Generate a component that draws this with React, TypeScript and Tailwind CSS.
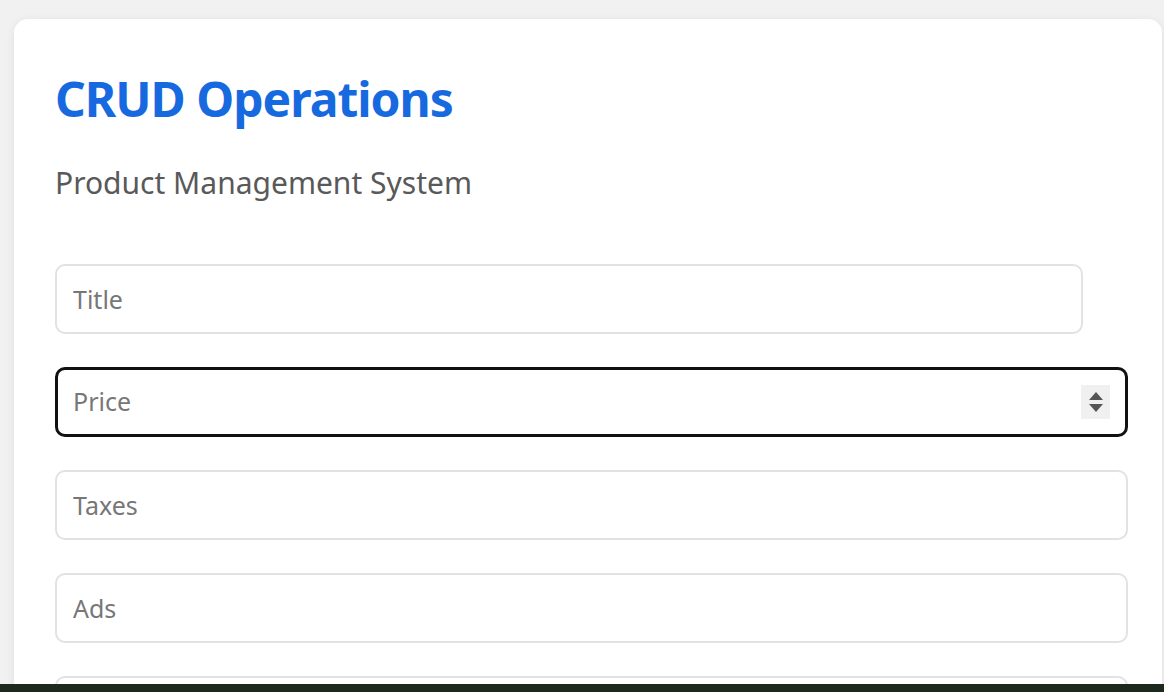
export default function App() {
  return (
    <main
      className="flex h-[692px] flex-col overflow-hidden bg-[#f1f1f1]"
      style={{ fontFamily: '"Noto Sans", "Open Sans", sans-serif' }}
    >
      <div className="flex-1 overflow-hidden pl-[14px] pr-[2px] pt-[19px]">
        <section className="h-[800px] rounded-[14px] bg-white pl-[41px] pt-[50px] shadow-[0_2px_10px_rgba(0,0,0,0.08)]">
          <h1 className="text-[48px] font-bold leading-[60px] tracking-[-1px] text-[#1769e0]">
            CRUD Operations
          </h1>
          <p className="mt-[36px] text-[30px] leading-[36px] text-[#595959]">
            Product Management System
          </p>

          <div className="mt-[63px] flex flex-col gap-[33px]">
            <input
              placeholder="Title"
              className="h-[70px] w-[1028px] rounded-[10px] border-2 border-[#e2e2e2] bg-white px-[16px] text-[25px] text-[#333] outline-none placeholder:text-[#777]"
            />

            <div className="flex h-[70px] w-[1073px] items-center rounded-[10px] border-[3px] border-[#111] bg-white pl-[15px] pr-[15px]">
              <input
                placeholder="Price"
                className="min-w-0 flex-1 bg-transparent text-[25px] text-[#333] outline-none placeholder:text-[#777]"
              />
              <div className="flex h-[34px] w-[29px] flex-col items-center justify-center gap-[4px] bg-[#f0f0f0]">
                <svg width="14" height="8" viewBox="0 0 14 8">
                  <path d="M7 0 L14 8 L0 8 Z" fill="#555" />
                </svg>
                <svg width="14" height="8" viewBox="0 0 14 8">
                  <path d="M0 0 L14 0 L7 8 Z" fill="#555" />
                </svg>
              </div>
            </div>

            <input
              placeholder="Taxes"
              className="h-[70px] w-[1073px] rounded-[10px] border-2 border-[#e2e2e2] bg-white px-[16px] text-[25px] text-[#333] outline-none placeholder:text-[#777]"
            />
            <input
              placeholder="Ads"
              className="h-[70px] w-[1073px] rounded-[10px] border-2 border-[#e2e2e2] bg-white px-[16px] text-[25px] text-[#333] outline-none placeholder:text-[#777]"
            />
            <input
              placeholder="Discount"
              className="h-[70px] w-[1073px] rounded-[10px] border-2 border-[#e2e2e2] bg-white px-[16px] text-[25px] text-[#333] outline-none placeholder:text-[#777]"
            />
          </div>
        </section>
      </div>
      <div className="h-[8px] shrink-0 bg-[#1d291c]" />
    </main>
  );
}
